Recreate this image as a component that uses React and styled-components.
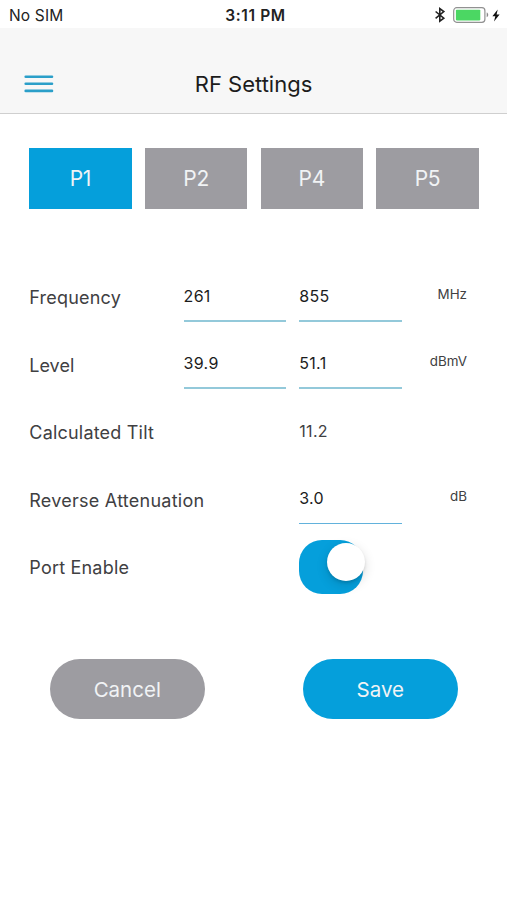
import * as React from 'react'
import styled, { createGlobalStyle } from 'styled-components'

const colors = {
  primary: '#059fdb',
  menu: '#2b9fc9',
  gray: '#9d9ca1',
  line: '#93c9da',
  text: '#404042',
}

const ports = ['P1', 'P2', 'P4', 'P5']

const rows = [
  { label: 'Frequency', spacing: 0.2, min: '261', max: '855', unit: 'MHz' },
  { label: 'Level', spacing: 0, min: '39.9', max: '51.1', unit: 'dBmV' },
  { label: 'Calculated Tilt', spacing: 0.2, value: '11.2' },
  { label: 'Reverse Attenuation', spacing: 0.25, max: '3.0', unit: 'dB' },
]

const App = () => {
  const [port, setPort] = React.useState('P1')
  const [enabled, setEnabled] = React.useState(true)

  return (
    <Screen>
      <GlobalStyle />
      <StatusBar>
        <Carrier>No SIM</Carrier>
        <Clock>3:11 PM</Clock>
        <StatusIcons>
          <Bluetooth />
          <Battery />
          <Bolt />
        </StatusIcons>
      </StatusBar>

      <Header>
        <MenuButton aria-label='Menu'>
          <MenuIcon />
        </MenuButton>
        <Title>RF Settings</Title>
      </Header>

      <Tabs>
        {ports.map(name => (
          <Tab key={name} $active={name === port} onClick={() => setPort(name)}>{name}</Tab>
        ))}
      </Tabs>

      <Form>
        {rows.map(row => (
          <Row key={row.label}>
            <Label $spacing={row.spacing}>{row.label}</Label>
            {row.min ? <Field>{row.min}</Field> : <span />}
            {row.value ? <Value>{row.value}</Value> : <Field $thin={!row.min}>{row.max}</Field>}
            <Unit>{row.unit}</Unit>
          </Row>
        ))}
        <Row>
          <Label $spacing={0.2}>Port Enable</Label>
          <span />
          <Switch role='switch' aria-checked={enabled} $on={enabled} onClick={() => setEnabled(!enabled)}>
            <Knob $on={enabled} />
          </Switch>
        </Row>
      </Form>

      <Actions>
        <Button>Cancel</Button>
        <Button $primary>Save</Button>
      </Actions>
    </Screen>
  )
}

const MenuIcon = () => (
  <svg width='30' height='18' viewBox='0 0 30 18' stroke={colors.menu} strokeWidth='2.6' strokeLinecap='round'>
    <path d='M1.7 1.7 H28 M1.7 8.8 H28 M1.7 15.9 H28' />
  </svg>
)

const Bluetooth = () => (
  <svg width='12' height='16' viewBox='0 0 12 16' fill='none' stroke='#222' strokeWidth='1.6'>
    <path d='M1.6 4.5 L9.8 11.2 L5.8 14.2 V1.6 L9.8 4.6 L1.6 11.3' />
  </svg>
)

const Battery = () => (
  <svg width='37' height='16' viewBox='0 0 37 16'>
    <rect x='0.7' y='0.7' width='31.2' height='14.6' rx='3' fill='#fff' stroke='#919191' strokeWidth='1.2' />
    <rect x='2.9' y='2.8' width='24.4' height='10.6' rx='0.8' fill='#4bd763' />
    <path d='M33.7 5.6 C35.7 6.3 35.7 9.5 33.7 10.2 Z' fill='#888' />
  </svg>
)

const Bolt = () => (
  <svg width='8' height='13' viewBox='0 0 8 13'>
    <path d='M5.7 0.4 L0.4 7.2 H3.3 L2 12.5 L7.6 5.4 H4.6 Z' fill='#111' />
  </svg>
)

const GlobalStyle = createGlobalStyle`
  * {
    box-sizing: border-box;
  }
  body {
    margin: 0;
    background: #fff;
  }
  button {
    padding: 0;
    border: 0;
    font-family: inherit;
    cursor: pointer;
  }
`

const Screen = styled.div`
  width: 507px;
  height: 900px;
  overflow: hidden;
  background: #fff;
  font-family: Inter, 'Liberation Sans', sans-serif;
`

const StatusBar = styled.div`
  display: grid;
  grid-template-columns: 1fr auto 1fr;
  align-items: center;
  height: 28px;
  padding: 2px 7px 0 9px;
  color: #222;
`

const Carrier = styled.span`
  padding-top: 1px;
  font-size: 15.5px;
  line-height: 20px;
  letter-spacing: 0.15px;
`

const Clock = styled.span`
  padding-top: 1px;
  padding-left: 2px;
  font-size: 15.5px;
  font-weight: 600;
  line-height: 20px;
  letter-spacing: 0.6px;
`

const StatusIcons = styled.div`
  display: flex;
  justify-content: flex-end;
  align-items: center;

  svg:nth-child(2) {
    margin: 0 2px 0 7px;
  }
`

const Header = styled.header`
  display: grid;
  grid-template-columns: 1fr auto 1fr;
  align-items: center;
  height: 86px;
  padding: 26px 24px 0;
  background: #f7f7f7;
  border-bottom: 1px solid #cfcfcf;
`

const MenuButton = styled.button`
  display: flex;
  width: 30px;
  background: none;
`

const Title = styled.h1`
  margin: 0;
  color: #1c1c1c;
  font-size: 22px;
  font-weight: 400;
  line-height: 28px;
`

const Tabs = styled.nav`
  display: grid;
  grid-template-columns: repeat(4, 1fr);
  gap: 13.4px;
  padding: 34px 28.3px 0 29.2px;
`

const Tab = styled.button`
  height: 60.6px;
  padding-top: 1px;
  background: ${({ $active }) => $active ? colors.primary : colors.gray};
  color: #f1f3f5;
  font-size: 21px;
  letter-spacing: -0.3px;
`

const Form = styled.div`
  padding: 54.9px 40px 0 29.3px;
`

const Row = styled.div`
  display: grid;
  grid-template-columns: 141px 102.4px 102.4px 1fr;
  column-gap: 13.3px;
  height: 67.45px;
`

const Label = styled.span`
  align-self: center;
  padding-top: 2px;
  color: ${colors.text};
  font-size: 18px;
  line-height: 24px;
  letter-spacing: ${({ $spacing }) => $spacing}px;
  white-space: nowrap;
`

const Field = styled.div`
  height: 58.4px;
  padding-top: 20.5px;
  border-bottom: ${({ $thin }) => $thin ? '1px solid #62b2dc' : `2px solid ${colors.line}`};
  color: #1c1c1c;
  font-size: 16px;
  line-height: 24px;
  letter-spacing: 0.3px;
`

const Value = styled.span`
  padding-top: 20.5px;
  color: ${colors.text};
  font-size: 16px;
  line-height: 24px;
  letter-spacing: 0.3px;
`

const Unit = styled.span`
  padding-top: 20.5px;
  color: ${colors.text};
  font-size: 13.4px;
  line-height: 20px;
  text-align: right;
`

const Switch = styled.button`
  align-self: center;
  display: flex;
  justify-content: ${({ $on }) => $on ? 'flex-end' : 'flex-start'};
  width: 64px;
  height: 54px;
  padding-top: 3px;
  border-radius: 23px;
  background: ${({ $on }) => $on ? colors.primary : colors.gray};
`

const Knob = styled.span`
  width: 38px;
  height: 38px;
  margin-right: ${({ $on }) => $on ? '-2.2px' : 0};
  border-radius: 50%;
  background: #fff;
  box-shadow: 0 4px 12px rgba(0, 0, 0, 0.14), 0 2px 3px rgba(0, 0, 0, 0.12);
`

const Actions = styled.div`
  display: flex;
  justify-content: space-between;
  padding: 58.1px 49px 0 49.5px;
`

const Button = styled.button`
  width: 155.5px;
  height: 60.5px;
  padding-top: 1px;
  border-radius: 31px;
  background: ${({ $primary }) => $primary ? colors.primary : colors.gray};
  color: #f1f3f5;
  font-size: 20.5px;
`

export default App
